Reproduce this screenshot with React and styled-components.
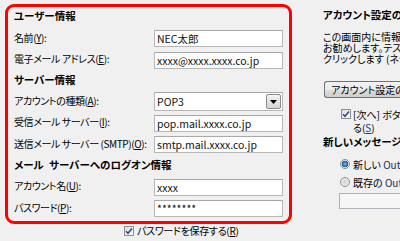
import React from "react";
import styled, { createGlobalStyle } from "styled-components";

const GlobalStyle = createGlobalStyle`
  html, body {
    margin: 0;
    padding: 0;
    background: #f0f0f0;
  }
  body {
    font-family: "Noto Sans CJK JP", "Noto Sans", sans-serif;
    font-size: 10.5px;
    color: #000;
    font-feature-settings: "palt";
  }
  * { box-sizing: border-box; }
`;

const Page = styled.div`
  width: 400px;
  height: 241px;
  overflow: hidden;
  display: flex;
  align-items: flex-start;
  padding: 4px 0 0 5px;
  background: #f0f0f0;
`;

const LeftColumn = styled.div`
  width: 287px;
  flex-shrink: 0;
  display: flex;
  flex-direction: column;
`;

const RedBox = styled.div`
  border: 3px solid #ff0000;
  border-radius: 9px;
  padding: 0 6px 1px 6px;
  display: flex;
  flex-direction: column;
`;

const SectionTitle = styled.div`
  height: ${(p) => p.$h || 20}px;
  line-height: 17px;
  font-weight: 700;
  white-space: pre;
  word-spacing: 3px;
`;

const FormRow = styled.div`
  display: grid;
  grid-template-columns: 140px 129px;
  align-items: center;
  height: 21.5px;
`;

const Label = styled.span`
  white-space: nowrap;
  line-height: 14px;
  margin-top: -2px;
  font-size: 10px;
  letter-spacing: -0.4px;
  u { text-decoration: underline; text-underline-offset: 1px; }
`;

const TextBox = styled.div`
  height: 17px;
  background: #fff;
  border: 1px solid #b7b7b7;
  border-top-color: #a9a9a9;
  padding: 0 2px;
  line-height: 15px;
  font-size: 10.5px;
  white-space: nowrap;
  overflow: hidden;
  color: #111;
`;

const SelectBox = styled.div`
  height: 19px;
  background: #fff;
  border: 1px solid #b7b7b7;
  border-top-color: #a9a9a9;
  display: flex;
  align-items: center;
  justify-content: space-between;
  padding: 0 1px 0 2px;
  font-size: 10.5px;
  color: #111;
`;

const DropButton = styled.div`
  width: 15px;
  height: 15px;
  border: 1px solid #8a8a8a;
  border-radius: 2px;
  background: linear-gradient(#f6f6f6, #e2e2e2 50%, #d4d4d4);
  display: flex;
  align-items: center;
  justify-content: center;
`;

const SaveRow = styled.div`
  display: flex;
  align-items: center;
  gap: 3px;
  height: 13px;
  margin-top: 0.5px;
  padding-left: 119px;
  white-space: nowrap;
  line-height: 13px;
  font-size: 10px;
  letter-spacing: -0.3px;
  u { text-decoration: underline; }
`;

const CheckBox = styled.span`
  width: 10px;
  height: 10px;
  flex-shrink: 0;
  border: 1px solid #8e8f8f;
  background: linear-gradient(135deg, #dcdcdc, #fbfbfb);
  display: inline-flex;
  align-items: center;
  justify-content: center;
`;

const RightColumn = styled.div`
  margin-left: 31px;
  flex: 1;
  min-width: 0;
  overflow: hidden;
  display: flex;
  flex-direction: column;
  white-space: nowrap;
`;

const PanelTitle = styled.div`
  height: 22px;
  line-height: 22px;
  font-weight: 700;
`;

const Paragraph = styled.div`
  margin-top: 5px;
  line-height: 11px;
  font-size: 10px;
  display: flex;
  flex-direction: column;
`;

const TestButton = styled.div`
  margin: 17px 0 0 1px;
  height: 17px;
  width: 110px;
  border: 1px solid #707070;
  border-right: none;
  border-radius: 3px 0 0 3px;
  background: linear-gradient(#f2f2f2, #ebebeb 50%, #dddddd 51%, #cfcfcf);
  line-height: 15px;
  padding-left: 6px;
  font-size: 10px;
`;

const AutoTestRow = styled.div`
  margin-top: 9.5px;
  display: grid;
  grid-template-columns: 12px 1fr;
  padding-left: 18px;
  line-height: 13px;
  font-size: 10px;
  u { text-decoration: underline; color: #1a3a8a; }
`;

const BoxCell = styled.div`
  height: 13px;
  display: flex;
  align-items: center;
`;

const SubTitle = styled.div`
  margin-top: 1.5px;
  height: 14px;
  line-height: 14px;
  font-weight: 700;
`;

const RadioList = styled.div`
  margin-top: 6px;
  display: flex;
  flex-direction: column;
`;

const RadioRow = styled.div`
  height: 18px;
  display: flex;
  align-items: center;
  gap: 3px;
  padding-left: 17px;
  font-size: 10px;
  .latin { color: #1b2b55; }
`;

const Radio = styled.span`
  width: 10px;
  height: 10px;
  flex-shrink: 0;
  border-radius: 50%;
  border: 1px solid #8e8f8f;
  background: ${(p) =>
    p.$checked
      ? "radial-gradient(circle, #6fc3f3 0, #2f79c1 2px, #1f5a9a 3px, #e8e8e8 3.6px, #fafafa 5px)"
      : "radial-gradient(circle, #d0d0d0 0, #e6e6e6 3px, #f8f8f8 5px)"};
`;

const PathBox = styled.div`
  margin: 2px 0 0 16px;
  height: 16px;
  border: 1px solid #adb2b8;
  border-right: none;
  background: #f6f6f6;
`;

const Check = () => (
  <svg width="8" height="8" viewBox="0 0 8 8">
    <path d="M1 4.2 L3 6.3 L7 1.4" fill="none" stroke="#2a4d8f" strokeWidth="1.6" />
  </svg>
);

const Arrow = () => (
  <svg width="7" height="4" viewBox="0 0 7 4">
    <path d="M0 0 H7 L3.5 4 Z" fill="#000" />
  </svg>
);

const fields = [
  { type: "title", text: "ユーザー情報", h: 21 },
  { label: "名前", key: "Y", value: "NEC太郎" },
  { label: "電子メール アドレス", key: "E", value: "xxxx@xxxx.xxxx.co.jp" },
  { type: "title", text: "サーバー情報", h: 20 },
  { label: "アカウントの種類", key: "A", value: "POP3", select: true },
  { label: "受信メール サーバー", key: "I", value: "pop.mail.xxxx.co.jp" },
  { label: "送信メール サーバー (SMTP)", key: "O", value: "smtp.mail.xxxx.co.jp" },
  { type: "title", text: "メール サーバーへのログオン情報", h: 21 },
  { label: "アカウント名", key: "U", value: "xxxx" },
  { label: "パスワード", key: "P", value: "********" },
];

export default function App() {
  return (
    <>
      <GlobalStyle />
      <Page>
        <LeftColumn>
          <RedBox>
            {fields.map((f, i) =>
              f.type === "title" ? (
                <SectionTitle key={i} $h={f.h}>
                  {f.text}
                </SectionTitle>
              ) : (
                <FormRow key={i}>
                  <Label>
                    {f.label}(<u>{f.key}</u>):
                  </Label>
                  {f.select ? (
                    <SelectBox>
                      <span>{f.value}</span>
                      <DropButton>
                        <Arrow />
                      </DropButton>
                    </SelectBox>
                  ) : (
                    <TextBox>{f.value}</TextBox>
                  )}
                </FormRow>
              )
            )}
          </RedBox>
          <SaveRow>
            <CheckBox>
              <Check />
            </CheckBox>
            <span>
              パスワードを保存する(<u>R</u>)
            </span>
          </SaveRow>
        </LeftColumn>
        <RightColumn>
          <PanelTitle>アカウント設定のテスト</PanelTitle>
          <Paragraph>
            <span>この画面内に情報を入力したら、アカウントのテストを行うことを</span>
            <span>お勧めします。テストを実行するには [アカウント設定のテスト] を</span>
            <span>クリックします (ネットワークに接続されている必要があります)。</span>
          </Paragraph>
          <TestButton>アカウント設定のテスト(T)...</TestButton>
          <AutoTestRow>
            <BoxCell>
              <CheckBox>
                <Check />
              </CheckBox>
            </BoxCell>
            <span>[次へ] ボタンをクリックしたらアカウント設定を自動的にテストす</span>
            <span />
            <span>
              る(<u>S</u>)
            </span>
          </AutoTestRow>
          <SubTitle>新しいメッセージの配信先:</SubTitle>
          <RadioList>
            <RadioRow>
              <Radio $checked />
              <span>
                新しい <span className="latin">Outlook データ ファイル(W)</span>
              </span>
            </RadioRow>
            <RadioRow>
              <Radio />
              <span>
                既存の <span className="latin">Outlook データ ファイル(X)</span>
              </span>
            </RadioRow>
          </RadioList>
          <PathBox />
        </RightColumn>
      </Page>
    </>
  );
}
